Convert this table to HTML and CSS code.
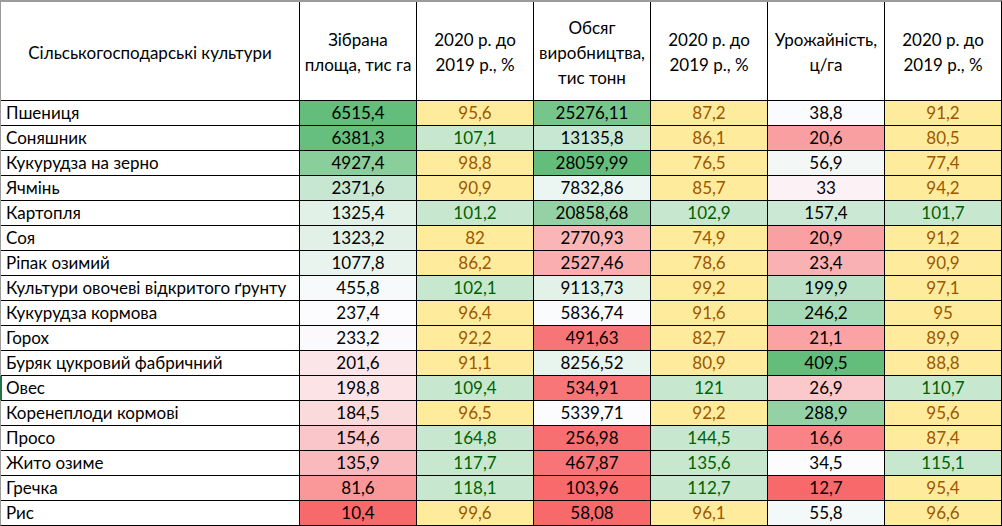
FILE: index.html
```html
<!DOCTYPE html>
<html lang="uk">
<head>
<meta charset="utf-8">
<title>Сільськогосподарські культури</title>
<link rel="stylesheet" href="styles.css">
</head>
<body>
<div class="sheet">
  <div class="h">Сільськогосподарські культури</div>
  <div class="h">Зібрана<br>площа, тис га</div>
  <div class="h">2020 р. до<br>2019 р., %</div>
  <div class="h">Обсяг<br>виробництва,<br>тис тонн</div>
  <div class="h">2020 р. до<br>2019 р., %</div>
  <div class="h">Урожайність,<br>ц/га</div>
  <div class="h">2020 р. до<br>2019 р., %</div>

  <div class="name">Пшениця</div>
  <div class="num" style="background:#63BE7B">6515,4</div>
  <div class="num y">95,6</div>
  <div class="num" style="background:#76C68B">25276,11</div>
  <div class="num y">87,2</div>
  <div class="num" style="background:#FAFBFE">38,8</div>
  <div class="num y">91,2</div>

  <div class="name">Соняшник</div>
  <div class="num" style="background:#66BF7E">6381,3</div>
  <div class="num g">107,1</div>
  <div class="num" style="background:#C8E7D2">13135,8</div>
  <div class="num y">86,1</div>
  <div class="num" style="background:#F99EA1">20,6</div>
  <div class="num y">80,5</div>

  <div class="name">Кукурудза на зерно</div>
  <div class="num" style="background:#8ACE9C">4927,4</div>
  <div class="num y">98,8</div>
  <div class="num" style="background:#63BE7B">28059,99</div>
  <div class="num y">76,5</div>
  <div class="num" style="background:#F3F8F7">56,9</div>
  <div class="num y">77,4</div>

  <div class="name">Ячмінь</div>
  <div class="num" style="background:#C8E7D2">2371,6</div>
  <div class="num y">90,9</div>
  <div class="num" style="background:#EBF5F1">7832,86</div>
  <div class="num y">85,7</div>
  <div class="num" style="background:#FCF2F5">33</div>
  <div class="num y">94,2</div>

  <div class="name">Картопля</div>
  <div class="num" style="background:#E1F1E8">1325,4</div>
  <div class="num g">101,2</div>
  <div class="num" style="background:#94D2A5">20858,68</div>
  <div class="num g">102,9</div>
  <div class="num" style="background:#CAE8D4">157,4</div>
  <div class="num g">101,7</div>

  <div class="name">Соя</div>
  <div class="num" style="background:#E1F1E8">1323,2</div>
  <div class="num y">82</div>
  <div class="num" style="background:#FAB5B7">2770,93</div>
  <div class="num y">74,9</div>
  <div class="num" style="background:#FAA0A3">20,9</div>
  <div class="num y">91,2</div>

  <div class="name">Ріпак озимий</div>
  <div class="num" style="background:#E8F4ED">1077,8</div>
  <div class="num y">86,2</div>
  <div class="num" style="background:#FAAEB0">2527,46</div>
  <div class="num y">78,6</div>
  <div class="num" style="background:#FAB1B4">23,4</div>
  <div class="num y">90,9</div>

  <div class="name">Культури овочеві відкритого ґрунту</div>
  <div class="num" style="background:#F7FAFA">455,8</div>
  <div class="num g">102,1</div>
  <div class="num" style="background:#E3F2E9">9113,73</div>
  <div class="num y">99,2</div>
  <div class="num" style="background:#B9E1C5">199,9</div>
  <div class="num y">97,1</div>

  <div class="name">Кукурудза кормова</div>
  <div class="num" style="background:#FCFCFF">237,4</div>
  <div class="num y">96,4</div>
  <div class="num" style="background:#F9FBFC">5836,74</div>
  <div class="num y">91,6</div>
  <div class="num" style="background:#A6D9B5">246,2</div>
  <div class="num y">95</div>

  <div class="name">Горох</div>
  <div class="num" style="background:#FCF9FC">233,2</div>
  <div class="num y">92,2</div>
  <div class="num" style="background:#F87577">491,63</div>
  <div class="num y">82,7</div>
  <div class="num" style="background:#FAA2A4">21,1</div>
  <div class="num y">89,9</div>

  <div class="name">Буряк цукровий фабричний</div>
  <div class="num" style="background:#FBE5E8">201,6</div>
  <div class="num y">91,1</div>
  <div class="num" style="background:#E8F4EE">8256,52</div>
  <div class="num y">80,9</div>
  <div class="num" style="background:#63BE7B">409,5</div>
  <div class="num y">88,8</div>

  <div class="name active">Овес</div>
  <div class="num" style="background:#FBE3E6">198,8</div>
  <div class="num g">109,4</div>
  <div class="num" style="background:#F87678">534,91</div>
  <div class="num g">121</div>
  <div class="num" style="background:#FBC9CB">26,9</div>
  <div class="num g">110,7</div>

  <div class="name">Коренеплоди кормові</div>
  <div class="num" style="background:#FBDADC">184,5</div>
  <div class="num y">96,5</div>
  <div class="num" style="background:#FCFCFF">5339,71</div>
  <div class="num y">92,2</div>
  <div class="num" style="background:#94D2A5">288,9</div>
  <div class="num y">95,6</div>

  <div class="name">Просо</div>
  <div class="num" style="background:#FBC6C9">154,6</div>
  <div class="num g">164,8</div>
  <div class="num" style="background:#F86F71">256,98</div>
  <div class="num g">144,5</div>
  <div class="num" style="background:#F98386">16,6</div>
  <div class="num y">87,4</div>

  <div class="name">Жито озиме</div>
  <div class="num" style="background:#FABABD">135,9</div>
  <div class="num g">117,7</div>
  <div class="num" style="background:#F87477">467,87</div>
  <div class="num g">135,6</div>
  <div class="num" style="background:#FCFCFF">34,5</div>
  <div class="num g">115,1</div>

  <div class="name">Гречка</div>
  <div class="num" style="background:#F99799">81,6</div>
  <div class="num g">118,1</div>
  <div class="num" style="background:#F86A6C">103,96</div>
  <div class="num g">112,7</div>
  <div class="num" style="background:#F8696B">12,7</div>
  <div class="num y">95,4</div>

  <div class="name">Рис</div>
  <div class="num" style="background:#F8696B">10,4</div>
  <div class="num y">99,6</div>
  <div class="num" style="background:#F8696B">58,08</div>
  <div class="num y">96,1</div>
  <div class="num" style="background:#F3F9F8">55,8</div>
  <div class="num y">96,6</div>
</div>
</body>
</html>
```
FILE: styles.css
```css
html, body {
  margin: 0;
  padding: 0;
  background: #ffffff;
}

.sheet {
  display: grid;
  grid-template-columns: 298px repeat(6, 116px);
  grid-template-rows: 98px repeat(17, 24px);
  gap: 1px;
  width: 1002px;
  height: 526px;
  box-sizing: border-box;
  background: #000000;
  border-top: 2px solid #9b9b9b;
  border-left: 1px solid #9b9b9b;
  border-right: 1px solid #000000;
  border-bottom: 1px solid #000000;
  font-family: "Lato", "Carlito", "Liberation Sans", sans-serif;
  font-size: 17px;
  color: #000000;
}

.h {
  background: #ffffff;
  display: flex;
  align-items: center;
  justify-content: center;
  text-align: center;
  line-height: 25px;
  padding-top: 2px;
}

.name {
  background: #ffffff;
  display: flex;
  align-items: center;
  padding-left: 5px;
  white-space: nowrap;
  line-height: 24px;
  position: relative;
}

.name.active::before {
  content: "";
  position: absolute;
  left: -1px;
  top: 0;
  width: 2px;
  height: 100%;
  background: #217346;
}

.num {
  background: #ffffff;
  display: flex;
  align-items: center;
  justify-content: center;
  line-height: 24px;
}

.y {
  background: #FFEB9C;
  color: #9C5700;
}

.g {
  background: #C8E7CF;
  color: #006100;
}
```
